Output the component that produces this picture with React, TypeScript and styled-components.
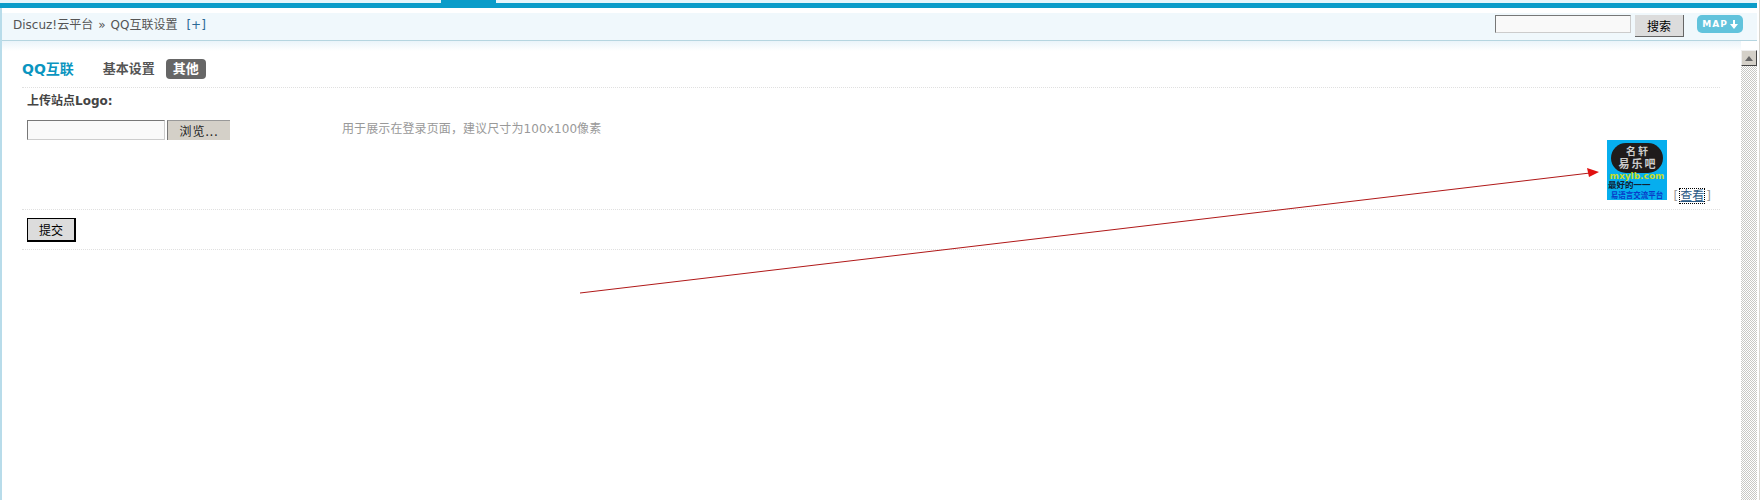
import React from "react";
import styled, { createGlobalStyle } from "styled-components";

const GlobalStyle = createGlobalStyle`
  html, body {
    margin: 0;
    padding: 0;
    background: #fff;
    overflow: hidden;
  }
  body {
    font: 12px/1.5 "DejaVu Sans", "Noto Sans CJK SC", sans-serif;
    color: #444;
  }
`;

const Page = styled.div`
  position: relative;
  width: 1760px;
  height: 500px;
  box-sizing: border-box;
  display: flex;
  flex-direction: column;
  padding-right: 2px;
  background: #fff;
  border-right: 1px solid #d8d6d0;
`;

const TopStrip = styled.div`
  height: 3px;
  background: #e6f5fa;
  padding-left: 441px;
`;

const ActiveTab = styled.div`
  width: 55px;
  height: 3px;
  background: #0a9cc9;
`;

const Band = styled.div`
  height: 5px;
  background: #0a9cc9;
`;

const Frame = styled.div`
  flex: 1;
  display: flex;
  flex-direction: column;
  min-height: 0;
  border-left: 2px solid #b8dcea;
`;

const Header = styled.div`
  margin-top: 5px;
  height: 27px;
  background: #f0f8fc;
  border-bottom: 1px solid #b5d5e0;
  display: flex;
  justify-content: space-between;
  align-items: flex-start;
`;

const Crumbs = styled.div`
  padding: 3px 0 0 11px;
  display: flex;
  gap: 5px;
  line-height: 18px;
  color: #555;
`;

const Expand = styled.a`
  margin-left: 4px;
  color: #2b6a96;
`;

const Tools = styled.div`
  display: flex;
  align-items: flex-start;
  padding: 2px 14px 0 0;
`;

const SearchInput = styled.input`
  width: 136px;
  height: 18px;
  box-sizing: border-box;
  background: #f9f9f9;
  border: 1px solid;
  border-color: #777 #ccc #ccc #777;
  padding: 0;
`;

const SearchButton = styled.button`
  width: 49px;
  height: 22px;
  margin-left: 4px;
  padding: 0;
  box-sizing: border-box;
  background: #dcdcdc;
  color: #000;
  border: 0;
  border-right: 1px solid #666;
  border-bottom: 1px solid #666;
  font: 12px "Noto Sans CJK SC", sans-serif;
`;

const MapButton = styled.a`
  margin-left: 13px;
  width: 46px;
  height: 18px;
  border-radius: 5px;
  background: #62c3dc;
  color: #fff;
  font: bold 9px/18px "DejaVu Sans", sans-serif;
  letter-spacing: 1px;
  display: flex;
  align-items: center;
  justify-content: center;
  gap: 2px;
`;

const Body = styled.div`
  flex: 1;
  display: flex;
  min-height: 0;
`;

const Main = styled.div`
  flex: 1;
  padding: 0 21px 0 20px;
  background: linear-gradient(#eaf4fa, #fff) no-repeat top / 100% 10px;
`;

const TitleRow = styled.div`
  height: 28px;
  padding-top: 18px;
  border-bottom: 1px dotted #e0e0e0;
  display: flex;
  align-items: flex-start;
`;

const Title = styled.h3`
  margin: 0 22px 0 0;
  font-size: 14px;
  line-height: 20px;
  font-weight: bold;
  color: #0a95c0;
`;

const Tab = styled.span<{ $active?: boolean }>`
  height: 20px;
  line-height: 20px;
  padding: 0 7px;
  margin-right: 4px;
  border-radius: 4px;
  font-size: 13px;
  font-weight: bold;
  color: ${(p) => (p.$active ? "#fff" : "#555")};
  background: ${(p) => (p.$active ? "#666" : "transparent")};
`;

const Label = styled.div`
  padding: 4px 0 0 5px;
  height: 28px;
  line-height: 18px;
  font-weight: bold;
  color: #444;
`;

const FileRow = styled.div`
  height: 20px;
  padding-left: 5px;
  display: flex;
  align-items: flex-start;
`;

const FileName = styled.div`
  width: 138px;
  height: 20px;
  box-sizing: border-box;
  background: #f9f9f9;
  border: 1px solid;
  border-color: #777 #ccc #ccc #777;
`;

const Browse = styled.button`
  width: 63px;
  height: 20px;
  margin-left: 2px;
  padding: 0;
  box-sizing: border-box;
  background: #d4d0c8;
  color: #222;
  border: 0;
  border-left: 1px solid #777;
  border-top: 1px solid #999;
  font: 12px "Noto Sans CJK SC", sans-serif;
  letter-spacing: 1px;
`;

const Hint = styled.span`
  margin-left: 112px;
  line-height: 18px;
  letter-spacing: 0.1px;
  color: #999;
`;

const PreviewRow = styled.div`
  height: 60px;
  padding: 0 9px 9px 0;
  border-bottom: 1px dotted #e0e0e0;
  display: flex;
  justify-content: flex-end;
  align-items: flex-end;
  gap: 7px;
`;

const ViewLink = styled.span`
  height: 14px;
  line-height: 14px;
  margin-bottom: -3px;
  color: #999;
  display: flex;
  gap: 2px;
`;

const ViewAnchor = styled.a`
  color: #2b5a86;
  text-decoration: underline;
  outline: 1px dotted #000;
`;

const SubmitRow = styled.div`
  height: 40px;
  padding: 8px 0 0 5px;
  box-sizing: border-box;
  border-bottom: 1px dotted #e0e0e0;
`;

const SubmitButton = styled.button`
  width: 49px;
  height: 24px;
  padding: 0;
  box-sizing: border-box;
  background: #dcdcdc;
  color: #000;
  border: 1px solid #000;
  border-right-width: 2px;
  border-bottom-width: 2px;
  font: 12px "Noto Sans CJK SC", sans-serif;
`;

const Scrollbar = styled.div`
  width: 16px;
  margin-top: 9px;
  background: repeating-conic-gradient(#c8c8c4 0 25%, #fff 0 50%) 0 0 / 2px 2px;
`;

const ScrollUp = styled.div`
  width: 16px;
  height: 16px;
  box-sizing: border-box;
  background: #d4d0c8;
  border: 1px solid;
  border-color: #eee #444 #444 #eee;
  display: flex;
  align-items: center;
  justify-content: center;
`;

const ArrowOverlay = styled.svg`
  position: absolute;
  left: 0;
  top: 0;
  pointer-events: none;
`;

const Logo = () => (
  <svg width="60" height="60" viewBox="0 0 60 60">
    <rect width="60" height="60" fill="#06aeee" />
    <rect x="4" y="3" width="52" height="30" rx="15" fill="#1f1b1b" />
    <text x="31" y="15" textAnchor="middle" fontSize="10" fontWeight="bold" letterSpacing="2" fill="#ccc" fontFamily="Noto Sans CJK SC">名轩</text>
    <text x="31" y="28" textAnchor="middle" fontSize="11" fontWeight="bold" letterSpacing="2" fill="#ccc" fontFamily="Noto Sans CJK SC">易乐吧</text>
    <text x="30" y="39" textAnchor="middle" fontSize="9" fontWeight="bold" fill="#c8dc28" fontFamily="DejaVu Sans">mxylb.com</text>
    <text x="1" y="48" fontSize="8.5" fontWeight="bold" fill="#123" fontFamily="Noto Sans CJK SC">最好的一一</text>
    <text x="30" y="58" textAnchor="middle" fontSize="7.5" fontWeight="bold" fill="#0a3cc8" fontFamily="Noto Sans CJK SC">易语言交流平台</text>
  </svg>
);

export default function App() {
  return (
    <>
      <GlobalStyle />
      <Page>
        <TopStrip>
          <ActiveTab />
        </TopStrip>
        <Band />
        <Frame>
          <Header>
            <Crumbs>
              <span>Discuz!云平台</span>
              <span>»</span>
              <span>QQ互联设置</span>
              <Expand>[+]</Expand>
            </Crumbs>
            <Tools>
              <SearchInput />
              <SearchButton>搜索</SearchButton>
              <MapButton>
                MAP
                <svg width="8" height="9" viewBox="0 0 8 9">
                  <path d="M3 0h2v4h3L4 9 0 4h3z" fill="#fff" />
                </svg>
              </MapButton>
            </Tools>
          </Header>
          <Body>
            <Main>
              <TitleRow>
                <Title>QQ互联</Title>
                <Tab>基本设置</Tab>
                <Tab $active>其他</Tab>
              </TitleRow>
              <Label>上传站点Logo:</Label>
              <FileRow>
                <FileName />
                <Browse>浏览...</Browse>
                <Hint>用于展示在登录页面，建议尺寸为100x100像素</Hint>
              </FileRow>
              <PreviewRow>
                <Logo />
                <ViewLink>
                  [<ViewAnchor>查看</ViewAnchor>]
                </ViewLink>
              </PreviewRow>
              <SubmitRow>
                <SubmitButton>提交</SubmitButton>
              </SubmitRow>
            </Main>
            <Scrollbar>
              <ScrollUp>
                <svg width="8" height="5" viewBox="0 0 8 5">
                  <path d="M4 0l4 5H0z" fill="#666" />
                </svg>
              </ScrollUp>
            </Scrollbar>
          </Body>
        </Frame>
        <ArrowOverlay width="1760" height="500">
          <line x1="580" y1="293" x2="1590" y2="173" stroke="#b01818" strokeWidth="1" />
          <path d="M1599 172l-12 -4 2 9z" fill="#e01010" />
        </ArrowOverlay>
      </Page>
    </>
  );
}
